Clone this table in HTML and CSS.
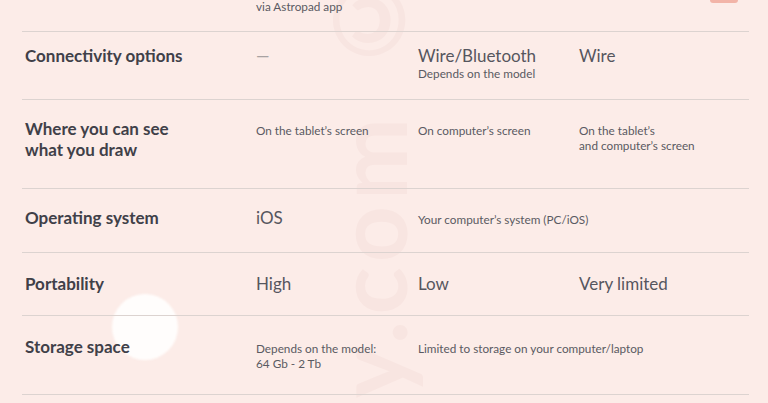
FILE: index.html
```html
<!DOCTYPE html>
<html>
<head>
  <link rel="stylesheet" href="styles.css">
</head>
<body>
  <div class="page">
    <div class="mark" aria-hidden="true">y.com ©</div>
    <div class="blob"></div>
    <div class="tab-edge"></div>

    <div class="table">
      <div class="row row-top">
        <div class="label"></div>
        <div class="small">via Astropad app</div>
        <div></div>
        <div></div>
      </div>

      <div class="row row-1">
        <div class="label">Connectivity options</div>
        <div class="dash">—</div>
        <div class="big">Wire/Bluetooth<div class="small">Depends on the model</div></div>
        <div class="big">Wire</div>
      </div>

      <div class="row row-2">
        <div class="label">Where you can see<br>what you draw</div>
        <div class="small">On the tablet’s screen</div>
        <div class="small">On computer’s screen</div>
        <div class="small">On the tablet’s<br>and computer’s screen</div>
      </div>

      <div class="row row-3">
        <div class="label">Operating system</div>
        <div class="big">iOS</div>
        <div class="small wide">Your computer’s system (PC/iOS)</div>
      </div>

      <div class="row row-4">
        <div class="label">Portability</div>
        <div class="big">High</div>
        <div class="big">Low</div>
        <div class="big">Very limited</div>
      </div>

      <div class="row row-5">
        <div class="label">Storage space</div>
        <div class="small">Depends on the model:<br>64 Gb - 2 Tb</div>
        <div class="small wide">Limited to storage on your computer/laptop</div>
      </div>
    </div>
  </div>
</body>
</html>
```

FILE: styles.css
```css
body {
  margin: 0;
  background: #fcece8;
  font-family: Lato, "Open Sans", sans-serif;
  overflow: hidden;
}

.page {
  position: relative;
  height: 403px;
  overflow: hidden;
}

/* faint watermark running up the middle */
.mark {
  position: absolute;
  left: 320px;
  top: -42px;
  height: 440px;
  writing-mode: vertical-rl;
  transform: rotate(180deg);
  font-size: 98px;
  font-weight: 700;
  line-height: 1;
  letter-spacing: 6px;
  color: #f8e5e1;
  white-space: nowrap;
  text-align: left;
  z-index: 0;
}

.blob {
  position: absolute;
  left: 112px;
  top: 294px;
  width: 66px;
  height: 66px;
  border-radius: 50%;
  background: #fffdfc;
  filter: blur(1px);
  z-index: 0;
}

.tab-edge {
  position: absolute;
  left: 710px;
  top: 0;
  width: 28px;
  height: 3px;
  border-radius: 0 0 3px 3px;
  background: #f2b4a8;
}

.table {
  position: relative;
  z-index: 1;
  margin-left: 22px;
  width: 727px;
}

.row {
  display: grid;
  grid-template-columns: 231px 162px 161px 1fr;
  align-items: baseline;
  padding-left: 3px;
  border-bottom: 1px solid #dcd3d0;
  box-sizing: border-box;
}

.row-top { height: 32px; }
.row-top .small { line-height: 13px; }
.row-1 { height: 68px; padding-top: 13px; }
.row-2 { height: 89px; padding-top: 18px; }
.row-3 { height: 64px; padding-top: 18px; }
.row-4 { height: 63px; padding-top: 20px; }
.row-5 { height: 79px; padding-top: 20px; }

.label {
  font-size: 17px;
  font-weight: 700;
  line-height: 21px;
  color: #404048;
}

.big {
  font-size: 17px;
  line-height: 21px;
  color: #56565e;
}

.small {
  font-size: 11.75px;
  line-height: 15px;
  color: #5a5a62;
}

.wide {
  grid-column: span 2;
}

.dash {
  font-size: 17px;
  line-height: 21px;
  color: #a8a2a2;
}
```
